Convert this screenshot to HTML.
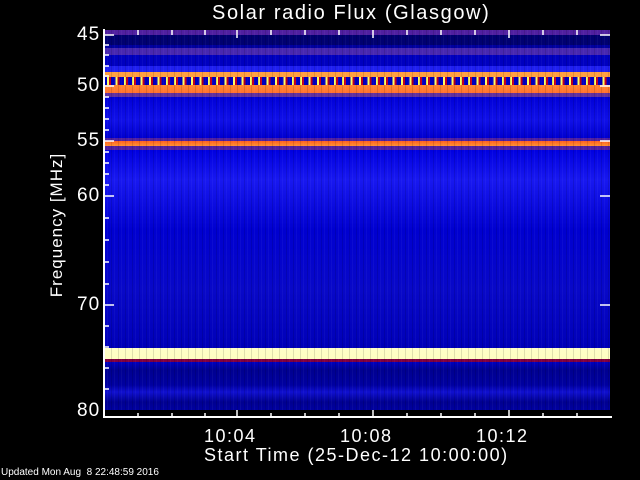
<!DOCTYPE html>
<html><head><style>
body{margin:0;background:#000;width:640px;height:480px;overflow:hidden;position:relative;font-family:"Liberation Sans",sans-serif;color:#fff}
.t{position:absolute;white-space:nowrap;font-weight:normal}
#plot{position:absolute;left:104px;top:30px;width:506px;height:380px;
background:linear-gradient(to bottom,
#5020a0 0px,#5020a0 5px,#000070 5px,#000070 15px,#0000a0 15px,#0000a0 18px,#4828b0 18px,#4828b0 25px,#0000c0 25px,#0000c0 36px,#2020f0 36px,#2020f0 42px,
#ffa040 42px,#ffa040 47px,transparent 47px,transparent 55px,#ff8830 55px,#ff7030 63px,#6030a0 63px,#6030a0 67px,
#0000d8 67px,#1010e8 90px,#0000d0 108px,#5020a0 108px,#5020a0 111px,#ff6020 111px,#ff9030 116px,#5020a0 116px,#5020a0 120px,
#0000e0 120px,#1818f0 150px,#0000d0 200px,#0808c8 260px,#0000b8 318px,#ffffc8 318px,#ffffc0 329px,#800040 329px,#800040 332px,
#0000c0 332px,#000090 340px,#0000a0 355px,#1010d0 362px,#000090 372px,#0000a0 380px)}
#stripes{position:absolute;left:104px;top:77px;width:506px;height:8px;
background:repeating-linear-gradient(to right,#0000c0 0,#0000c0 3px,#ffff60 3px,#ffff60 5px,#c00020 5px,#c00020 7px,#0000c0 7px,#0000c0 8.4px)}
#noise{position:absolute;left:104px;top:30px;width:506px;height:380px;
background:repeating-linear-gradient(to right,rgba(0,0,0,0.12) 0,rgba(0,0,0,0.12) 1px,transparent 1px,transparent 3px,rgba(255,255,255,0.04) 3px,rgba(255,255,255,0.04) 4px,transparent 4px,transparent 7px)}
#ax{position:absolute;left:103px;top:29px;width:507px;height:387px;border-left:2px solid #fff;border-bottom:2px solid #fff}
</style></head><body>
<div id="plot"></div><div id="stripes"></div><div id="noise"></div>
<div id="ax"></div>
<svg width="640" height="480" style="position:absolute;left:0;top:0" stroke="#fff" stroke-width="1.5">
<g>
<line x1="237" y1="418" x2="237" y2="410"/><line x1="373" y1="418" x2="373" y2="410"/><line x1="509" y1="418" x2="509" y2="410"/>
<line x1="138" y1="418" x2="138" y2="413"/><line x1="172" y1="418" x2="172" y2="413"/><line x1="205" y1="418" x2="205" y2="413"/>
<line x1="271" y1="418" x2="271" y2="413"/><line x1="305" y1="418" x2="305" y2="413"/><line x1="339" y1="418" x2="339" y2="413"/>
<line x1="407" y1="418" x2="407" y2="413"/><line x1="441" y1="418" x2="441" y2="413"/><line x1="475" y1="418" x2="475" y2="413"/>
<line x1="543" y1="418" x2="543" y2="413"/><line x1="577" y1="418" x2="577" y2="413"/>
<line x1="138" y1="30" x2="138" y2="35"/><line x1="172" y1="30" x2="172" y2="35"/><line x1="205" y1="30" x2="205" y2="35"/><line x1="237" y1="30" x2="237" y2="38"/>
<line x1="271" y1="30" x2="271" y2="35"/><line x1="305" y1="30" x2="305" y2="35"/><line x1="339" y1="30" x2="339" y2="35"/><line x1="373" y1="30" x2="373" y2="38"/>
<line x1="407" y1="30" x2="407" y2="35"/><line x1="441" y1="30" x2="441" y2="35"/><line x1="475" y1="30" x2="475" y2="35"/><line x1="509" y1="30" x2="509" y2="38"/>
<line x1="543" y1="30" x2="543" y2="35"/><line x1="577" y1="30" x2="577" y2="35"/>
</g>
<g>
<line x1="104" y1="35" x2="114" y2="35"/><line x1="104" y1="86" x2="114" y2="86"/><line x1="104" y1="141" x2="114" y2="141"/><line x1="104" y1="196" x2="114" y2="196"/><line x1="104" y1="305" x2="114" y2="305"/>
<line x1="104" y1="45" x2="109" y2="45"/><line x1="104" y1="55" x2="109" y2="55"/><line x1="104" y1="66" x2="109" y2="66"/><line x1="104" y1="76" x2="109" y2="76"/>
<line x1="104" y1="97" x2="109" y2="97"/><line x1="104" y1="108" x2="109" y2="108"/><line x1="104" y1="119" x2="109" y2="119"/><line x1="104" y1="130" x2="109" y2="130"/>
<line x1="104" y1="152" x2="109" y2="152"/><line x1="104" y1="163" x2="109" y2="163"/><line x1="104" y1="174" x2="109" y2="174"/><line x1="104" y1="185" x2="109" y2="185"/>
<line x1="104" y1="218" x2="109" y2="218"/><line x1="104" y1="240" x2="109" y2="240"/><line x1="104" y1="262" x2="109" y2="262"/><line x1="104" y1="284" x2="109" y2="284"/>
<line x1="104" y1="326" x2="109" y2="326"/><line x1="104" y1="347" x2="109" y2="347"/><line x1="104" y1="368" x2="109" y2="368"/><line x1="104" y1="389" x2="109" y2="389"/>
<line x1="610" y1="35" x2="600" y2="35"/><line x1="610" y1="86" x2="600" y2="86"/><line x1="610" y1="141" x2="600" y2="141"/><line x1="610" y1="196" x2="600" y2="196"/><line x1="610" y1="305" x2="600" y2="305"/>
</g>
</svg>
<div class="t" style="left:212px;top:2px;font-size:20px;letter-spacing:1.6px">Solar radio Flux (Glasgow)</div>
<div class="t" style="left:77px;top:24px;font-size:19px;letter-spacing:1px">45</div>
<div class="t" style="left:77px;top:75px;font-size:19px;letter-spacing:1px">50</div>
<div class="t" style="left:77px;top:130px;font-size:19px;letter-spacing:1px">55</div>
<div class="t" style="left:77px;top:185px;font-size:19px;letter-spacing:1px">60</div>
<div class="t" style="left:77px;top:294px;font-size:19px;letter-spacing:1px">70</div>
<div class="t" style="left:77px;top:400px;font-size:19px;letter-spacing:1px">80</div>
<div class="t" style="left:57px;top:225px;font-size:17px;letter-spacing:1px;transform:translate(-50%,-50%) rotate(-90deg)">Frequency [MHz]</div>
<div class="t" style="left:204px;top:426px;font-size:18px;letter-spacing:1.5px">10:04</div>
<div class="t" style="left:340px;top:426px;font-size:18px;letter-spacing:1.5px">10:08</div>
<div class="t" style="left:476px;top:426px;font-size:18px;letter-spacing:1.5px">10:12</div>
<div class="t" style="left:204px;top:445px;font-size:18px;letter-spacing:1.5px">Start Time (25-Dec-12 10:00:00)</div>
<div class="t" style="left:1px;top:467px;font-size:10px">Updated Mon Aug&nbsp; 8 22:48:59 2016</div>
</body></html>
